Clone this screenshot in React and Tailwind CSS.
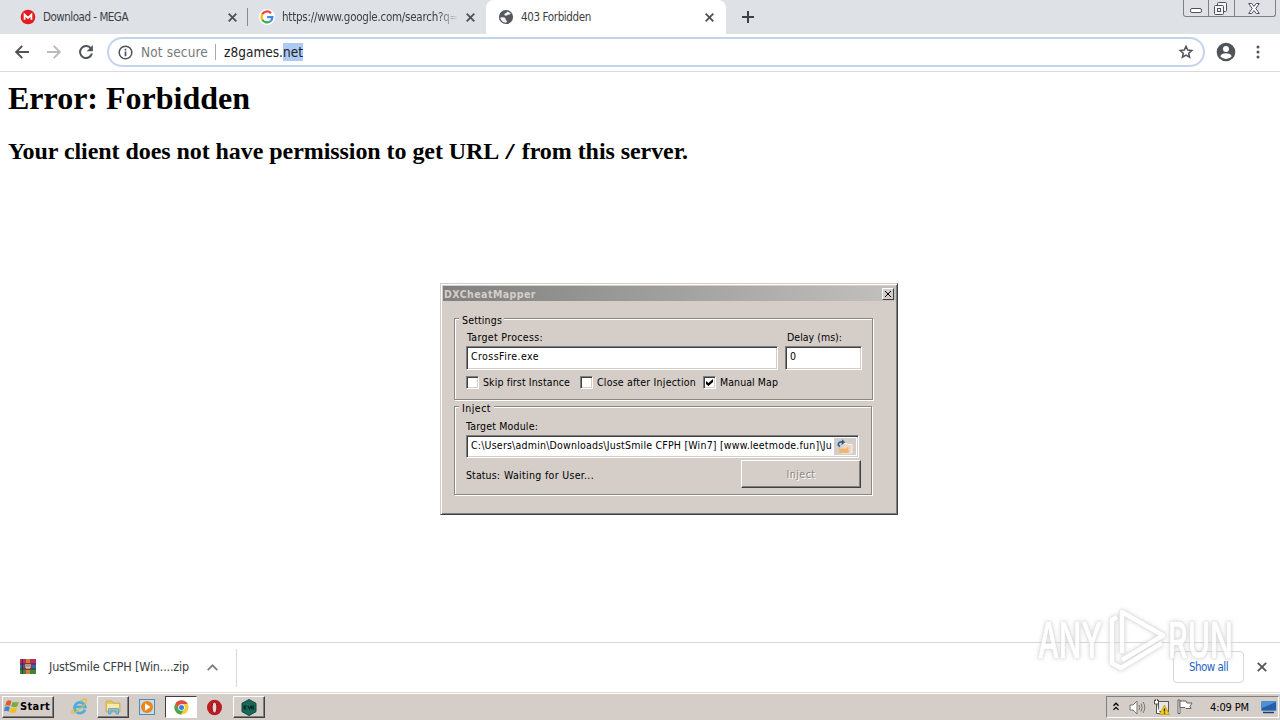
import { useLayoutEffect, useRef } from "react";

const UI = "font-['DejaVu_Sans_Condensed','DejaVu_Sans',sans-serif] [font-stretch:condensed]";

// Single line of text spread over a known width in pixels.
function Fit({ w, className = "", children }) {
  const ref = useRef(null);
  useLayoutEffect(() => {
    const el = ref.current;
    el.style.letterSpacing = "0px";
    const natural = el.getBoundingClientRect().width;
    el.style.letterSpacing = (w - natural) / el.textContent.length + "px";
  }, [w]);
  return (
    <span ref={ref} className={`inline-block shrink-0 whitespace-pre ${className}`}>
      {children}
    </span>
  );
}

function Cross({ className = "", size = 9, width = 1.9 }) {
  return (
    <svg className={`shrink-0 ${className}`} width={size} height={size} viewBox="0 0 9 9" stroke="#505459" strokeWidth={width}>
      <path d="M.7.7l7.6 7.6M8.3.7L.7 8.3" />
    </svg>
  );
}

function Mega() {
  return (
    <svg className="shrink-0" width="16" height="16" viewBox="0 0 16 16">
      <circle cx="8" cy="8" r="7.3" fill="#e31b23" />
      <path d="M4.6 10.7V5.6L8 8.9l3.4-3.3v5.1" fill="none" stroke="#fff" strokeWidth="1.8" />
    </svg>
  );
}

function Google() {
  return (
    <svg className="shrink-0" width="16" height="16" viewBox="0 0 16 16">
      <circle cx="8" cy="8" r="8" fill="#fff" />
      <g fill="none" strokeWidth="2.2">
        <path d="M12 4.2A5.4 5.4 0 0 0 3.3 5.3" stroke="#ea4335" />
        <path d="M3.3 5.3a5.4 5.4 0 0 0 0 5.4" stroke="#fbbc05" />
        <path d="M3.3 10.7a5.4 5.4 0 0 0 8.4 1.3" stroke="#34a853" />
        <path d="M11.7 12a5.4 5.4 0 0 0 1.7-3.9H8.2" stroke="#4285f4" />
      </g>
    </svg>
  );
}

function Globe() {
  return (
    <svg className="shrink-0" width="16" height="16" viewBox="0 0 16 16">
      <circle cx="8" cy="8" r="7.1" fill="#55595e" />
      <path d="M2.300 8.600c2-.5 4.300-.3 5.200.8.400.8-.2 1.600.8 2.100 1 .4.700 1.300.2 2.100-3.600.3-6-2-6.200-5zM8.800 2.600c1.900.1 3.300 1.200 4.100 2.500-1.200-.2-1.500.9-2.700.7-1 0-1.300 1-2.500.9-1.400-.1-1.700-1.400-.8-2.100.800-.5 2-.6 1.900-2z" fill="#f1f3f4" />
    </svg>
  );
}

function TabStrip() {
  return (
    <div className="flex h-[34px] shrink-0 items-start bg-[#dee1e6] text-[12px] leading-[16px] text-[#3c4043]">
      <div className="flex h-[34px] w-[247px] shrink-0 items-center pl-5">
        <Mega />
        <Fit w={85} className="ml-[7px] text-[11.5px]">Download - MEGA</Fit>
        <Cross className="ml-auto mr-[10px]" />
      </div>
      <div className="mt-2 h-[18px] w-px shrink-0 bg-[#868b90]" />
      <div className="flex h-[34px] w-[238px] shrink-0 items-center pl-[11px]">
        <Google />
        <div className="ml-[7px] w-[176px] overflow-hidden [mask-image:linear-gradient(90deg,#000_88%,transparent)]">
          <Fit w={176} className="text-[11.5px]">https://www.google.com/search?q=</Fit>
        </div>
        <Cross className="ml-2" />
      </div>
      <div className="flex h-[34px] w-[240px] shrink-0 items-center rounded-t-lg bg-white pl-3">
        <Globe />
        <Fit w={70} className="ml-[7px] text-[11.5px]">403 Forbidden</Fit>
        <Cross className="ml-auto mr-[12px]" />
      </div>
      <svg className="ml-4 mt-[11px]" width="12" height="12" viewBox="0 0 12 12" stroke="#3c4043" strokeWidth="2">
        <path d="M6 0v12M0 6h12" />
      </svg>
      <div className="ml-auto mr-[4px] flex h-[17px] w-[93px] rounded-b-[3px] border border-t-0 border-[#7d8087] bg-[#dfe1e6]">
        <div className="w-[25px] border-r border-[#7d8087] pl-[6px] pt-[8px]">
          <div className="h-[5px] w-3 rounded-[2px] border border-[#4b5060] bg-white" />
        </div>
        <div className="w-[26px] border-r border-[#7d8087] pl-[5px] pt-[2px]">
          <svg width="13" height="13" viewBox="0 0 13 13" fill="#f5f6f8" stroke="#4b5060">
            <rect x="3.500" y=".5" width="9" height="9" rx="1" />
            <rect x=".5" y="3.500" width="9" height="9" rx="1" />
            <rect x="3.500" y="6.500" width="3" height="3" />
          </svg>
        </div>
        <svg className="ml-[13px] mt-[3px]" width="12" height="11" viewBox="0 0 12 11" fill="#fff" stroke="#4b5060">
          <path d="M.7.5h3L6 3.400 8.300.5h3L7.800 5.500l3.500 5h-3L6 7.600l-2.300 2.900h-3l3.500-5z" />
        </svg>
      </div>
    </div>
  );
}

function Toolbar() {
  return (
    <div className="flex h-[38px] shrink-0 items-center border-b border-[#d9dbde] bg-white pb-px">
      <svg className="ml-[15px]" width="14" height="14" viewBox="0 0 14 14" fill="none" stroke="#505357" strokeWidth="1.900">
        <path d="M14 7H1.500M7.300.9L1.200 7l6.100 6.100" />
      </svg>
      <svg className="ml-[18px]" width="14" height="14" viewBox="0 0 14 14" fill="none" stroke="#b9bbbe" strokeWidth="1.900">
        <path d="M0 7h12.500M6.700.9L12.800 7l-6.100 6.100" />
      </svg>
      <svg className="ml-[18px]" width="14" height="14" viewBox="0 0 14 14">
        <path d="M12 3.600A6 6 0 1 0 12.900 8.500" fill="none" stroke="#505357" strokeWidth="2" />
        <path d="M13.900 0v6.200H7.700z" fill="#505357" />
      </svg>
      <div className="ml-[14px] flex h-[30px] w-[1098px] items-center rounded-full border-2 border-[#c3d3ec] bg-white pl-[9px] text-[13.500px] leading-[18px] text-[#202124]">
        <svg width="15" height="15" viewBox="0 0 15 15" fill="none" stroke="#505357">
          <circle cx="7.500" cy="7.500" r="6.300" strokeWidth="1.500" />
          <path d="M7.500 6.500v4.800M7.500 3.700v1.700" strokeWidth="1.700" />
        </svg>
        <Fit w={67} className="ml-2 text-[#76797d]">Not secure</Fit>
        <div className="ml-[7px] mr-[8px] h-4 w-px bg-[#a6a9ad]" />
        <div className="flex">
          <Fit w={59}>z8games.</Fit>
          <Fit w={20} className="bg-[#accaf4]">net</Fit>
        </div>
        <svg className="ml-auto mr-[9px]" width="16" height="16" viewBox="0 0 16 16" fill="none" stroke="#505357" strokeWidth="1.500">
          <path d="M8 2.300l1.700 3.800 4.100.4-3.100 2.700.9 4L8 11.100l-3.600 2.100.9-4-3.100-2.700 4.100-.4z" />
        </svg>
      </div>
      <svg className="ml-[11px]" width="20" height="20" viewBox="0 0 20 20">
        <circle cx="10" cy="10" r="9.300" fill="#505357" />
        <circle cx="10" cy="7" r="3" fill="#fff" />
        <path d="M4.200 14.200c1-2.300 4-2.900 5.800-2.900s4.800.6 5.800 2.900A7.200 7.200 0 0 1 10 17a7.200 7.200 0 0 1-5.800-2.800z" fill="#fff" />
      </svg>
      <svg className="ml-[20px]" width="4" height="14" viewBox="0 0 4 14" fill="#505357">
        <circle cx="2" cy="2" r="1.500" />
        <circle cx="2" cy="7" r="1.500" />
        <circle cx="2" cy="12" r="1.500" />
      </svg>
    </div>
  );
}

const SUNKEN = "border border-t-[#808080] border-l-[#808080] border-b-white border-r-white bg-white shadow-[inset_1px_1px_0_#404040,inset_-1px_-1px_0_#d5cec8]";
const GROUP = "border border-[#8a8681] shadow-[1px_1px_0_#fff,inset_1px_1px_0_#fff]";

function Check({ on, w, children, className = "" }) {
  return (
    <div className={`flex items-center ${className}`}>
      <div className={`flex h-[13px] w-[13px] shrink-0 items-center justify-center ${SUNKEN}`}>
        {on && (
          <svg width="7" height="7" viewBox="0 0 7 7">
            <path d="M0 2v3l2.500 2L7 3V0L2.500 4z" fill="#000" />
          </svg>
        )}
      </div>
      <Fit w={w} className="ml-1">{children}</Fit>
    </div>
  );
}

function Dialog() {
  return (
    <div className="absolute left-[440px] top-[283px] h-[232px] w-[458px] border border-b-[#404040] border-l-[#d5cec8] border-r-[#404040] border-t-[#d5cec8] bg-[#d5cec8] p-px text-[10.500px] leading-[13px] text-black shadow-[inset_1px_1px_0_#fff,inset_-1px_-1px_0_#808080]">
      <div className="ml-px mt-px flex h-[15px] w-[453px] items-center bg-linear-to-r from-[#808080] to-[#c2c1be]">
        <Fit w={92} className="ml-px mt-px font-bold text-[#d5cec8]">DXCheatMapper</Fit>
        <div className="ml-auto mr-[2px] flex h-3 w-3 items-center justify-center border border-b-[#404040] border-l-white border-r-[#404040] border-t-white bg-[#d5cec8]">
          <svg width="6" height="6" viewBox="0 0 6 6" stroke="#000" strokeWidth="1">
            <path d="M0 0l6 6M6 0L0 6" />
          </svg>
        </div>
      </div>
      <div className={`ml-[12px] mt-[17px] h-[82px] w-[419px] ${GROUP}`}>
        <div className="-mt-[5px] ml-[4px] flex w-[45px] bg-[#d5cec8] px-[3px]">
          <Fit w={40}>Settings</Fit>
        </div>
        <div className="ml-[12px] mt-[4px] flex">
          <Fit w={76}>Target Process:</Fit>
          <Fit w={55} className="ml-[244px]">Delay (ms):</Fit>
        </div>
        <div className="ml-[11px] mt-[2px] flex gap-[7px]">
          <div className={`h-6 w-[312px] pl-1 pt-[3px] ${SUNKEN}`}><Fit w={68}>CrossFire.exe</Fit></div>
          <div className={`h-6 w-[77px] pl-1 pt-[3px] ${SUNKEN}`}>0</div>
        </div>
        <div className="ml-[11px] mt-[6px] flex">
          <Check w={87}>Skip first Instance</Check>
          <Check w={99} className="ml-[10px]">Close after Injection</Check>
          <Check w={58} className="-mt-px ml-[7px]" on>Manual Map</Check>
        </div>
      </div>
      <div className={`ml-[12px] mt-[6px] h-[89px] w-[418px] ${GROUP}`}>
        <div className="-mt-[5px] ml-[4px] flex w-[35px] bg-[#d5cec8] px-[3px]">
          <Fit w={29}>Inject</Fit>
        </div>
        <div className="ml-[11px] mt-[5px] flex"><Fit w={72}>Target Module:</Fit></div>
        <div className={`ml-[11px] mt-[2px] flex h-[23px] w-[393px] items-start pl-1 ${SUNKEN}`}>
          <Fit w={361} className="mt-[3px]">{"C:\\Users\\admin\\Downloads\\JustSmile CFPH [Win7] [www.leetmode.fun]\\Ju"}</Fit>
          <div className="ml-[2px] mt-[2px] flex h-[17px] w-[22px] items-center justify-center bg-[#d5cec8]">
            <svg width="18" height="16" viewBox="0 0 18 16">
              <path d="M8 4.500h3l1 1h4V14H5V9" fill="#ead8c2" stroke="#f7f3ee" />
              <path d="M2.500 9.500H10L12 8l1 6H4z" fill="#efb66e" />
              <path d="M4 7.500C.3 5.500 3 2 7 3" fill="none" stroke="#246597" strokeWidth="1.700" />
              <path d="M6 .3L9.300 3.300 5.500 6z" fill="#246597" />
            </svg>
          </div>
        </div>
        <div className="ml-[11px] mt-[2px] flex">
          <Fit w={34} className="mt-[9px]">Status:</Fit>
          <Fit w={90} className="ml-[4px] mt-[9px]">Waiting for User...</Fit>
          <div className="ml-[147px] flex h-[28px] w-[120px] items-center justify-center border border-b-[#404040] border-l-white border-r-[#404040] border-t-white text-[#8a8681] shadow-[inset_-1px_-1px_0_#808080] [text-shadow:1px_1px_0_#fff]">
            <Fit w={29}>Inject</Fit>
          </div>
        </div>
      </div>
    </div>
  );
}

function Shelf() {
  return (
    <div className="flex h-[50px] shrink-0 items-start border-t border-[#d5d7da] bg-white">
      <svg className="ml-5 mt-4" width="16" height="15" viewBox="0 0 16 15">
        <path fill="#b5305c" d="M0 0h16v5H0z" />
        <path fill="#3b62b5" d="M0 5h16v5H0z" />
        <path fill="#37883e" d="M0 10h16v5H0z" />
        <path fill="#d67b3c" d="M6 0h4v15H6z" />
        <path fill="#4b2b29" d="M0 4.500h16v1H0zM0 9.500h16v1H0zM2 0h1v15H2z" />
        <path fill="#7d3a35" d="M4.500 4h7v7h-7z" />
        <path d="M6 5v4h4V5M8 5v4" fill="none" stroke="#f3ebe0" />
      </svg>
      <Fit w={140} className="ml-[13px] mt-[15px] text-[12.500px] leading-[17px] text-[#3c4043]">JustSmile CFPH [Win....zip</Fit>
      <svg className="ml-[18px] mt-[21px]" width="11" height="7" viewBox="0 0 11 7" fill="none" stroke="#7b7e82" strokeWidth="1.700">
        <path d="M.7 6.200L5.500 1.300l4.800 4.900" />
      </svg>
      <div className="ml-[18px] mt-[6px] h-[38px] w-px bg-[#d5d7da]" />
      <div className="ml-auto mt-[8px] flex h-8 w-[71px] items-center justify-center rounded border border-[#d5d7da] text-[11.500px] leading-4 text-[#2464c4]">
        <Fit w={39}>Show all</Fit>
      </div>
      <Cross className="ml-[13px] mr-[13px] mt-[19px]" size={10} width={1.600} />
    </div>
  );
}

const RAISED = "border border-t-white border-l-white border-b-[#404040] border-r-[#404040] shadow-[inset_-1px_-1px_0_#808080]";

function Taskbar() {
  return (
    <div className="flex h-7 shrink-0 items-start border-t border-[#dedad5] bg-[#d5cec8] pt-[2px] text-[11px] leading-[13px] text-black shadow-[inset_0_1px_0_#fff]">
      <div className={`ml-[2px] mt-px flex h-[22px] w-[52px] items-center pl-px ${RAISED}`}>
        <svg width="16" height="16" viewBox="0 0 15 15">
          <path d="M2.500 2Q5 .5 7 2L5.800 6.500Q3.500 5 1 6.500z" fill="#e25a25" />
          <path d="M8 2.500q2.500 1.300 6 0L12.500 7Q9.500 8.400 6.800 7z" fill="#77ae3f" />
          <path d="M.8 7.500q2.500-1.500 4.700 0L4.300 12Q2 10.500 0 11.500z" fill="#3f83cc" />
          <path d="M6.500 8q2.500 1.300 5.700 0L11 12.500q-3 1.300-5.700-.2z" fill="#f4bd26" />
        </svg>
        <Fit w={30} className="-mt-px font-bold">Start</Fit>
      </div>
      <svg className="ml-[17px] mt-[3px]" width="17" height="17" viewBox="0 0 17 17" fill="none">
        <path d="M14 11.500A5.400 5.400 0 1 1 14.200 8.800H4.500" stroke="#4eaddd" strokeWidth="2.800" />
        <path d="M15 1.200c1.500 1-1 6-5.500 9.600S1.500 15.800 1 15c-.6-1 1-3 2-4M9.500 3C12 1.300 14 .7 15 1.200" stroke="#dfbd42" strokeWidth="1.300" />
      </svg>
      <div className={`ml-[9px] mt-px flex h-[22px] w-8 items-center justify-center ${RAISED}`}>
        <svg width="17" height="16" viewBox="0 0 17 16">
          <path d="M1 2h6l1 2h7v9H1z" fill="#e7c95e" stroke="#b89a43" strokeWidth=".6" />
          <path d="M2 5h12v6H2z" fill="#f8e9a7" />
          <path d="M3.500 15V9.500h10V15h-2.500v-3H6v3z" fill="#7fc3e6" stroke="#468db6" strokeWidth=".6" />
        </svg>
      </div>
      <svg className="ml-[10px] mt-[4px]" width="16" height="16" viewBox="0 0 16 16">
        <rect x=".5" y=".5" width="15" height="15" fill="#c4dff2" stroke="#508bb8" />
        <circle cx="8" cy="8" r="6" fill="#ec8616" />
        <path d="M6 4.200L11.500 8 6 11.800z" fill="#fff" />
      </svg>
      <div className="ml-[10px] mt-px flex h-[22px] w-8 items-center justify-center border border-b-white border-l-[#404040] border-r-white border-t-[#404040] bg-white">
        <svg width="15" height="15" viewBox="0 0 15 15">
          <circle cx="7.500" cy="7.500" r="7" fill="#f4cb38" />
          <path d="M1.300 4A7 7 0 0 1 13.700 4H7.500L5 9z" fill="#df4b3c" />
          <path d="M1.300 4A7 7 0 0 0 7 14.500L9.600 9.500 5 9z" fill="#4ba450" />
          <circle cx="7.500" cy="7.500" r="3.300" fill="#fff" />
          <circle cx="7.500" cy="7.500" r="2.500" fill="#3d7de0" />
        </svg>
      </div>
      <svg className="ml-[9px] mt-[4px]" width="17" height="17" viewBox="0 0 17 17">
        <ellipse cx="8.500" cy="8.500" rx="7.500" ry="7.800" fill="#bd1c22" />
        <ellipse cx="8.500" cy="8.500" rx="2.400" ry="5.500" fill="#edd4d3" stroke="#7d1014" />
      </svg>
      <div className={`ml-[10px] mt-px flex h-[22px] w-8 items-center justify-center ${RAISED}`}>
        <svg width="16" height="17" viewBox="0 0 16 17">
          <path d="M8 .5l7 3.800v8.400l-7 3.800-7-3.800V4.300z" fill="#176856" stroke="#12493f" />
          <path d="M5.800 7H3v3h2.800M7 7l1.600 3L10 7M13.200 7h-2.500v3h2.500M10.700 8.500H13M3 8.500h2" stroke="#072a28" strokeWidth="1.200" fill="none" />
        </svg>
      </div>
      <div className="ml-auto mr-[1px] mt-px flex h-[22px] w-[173px] items-center border border-b-white border-l-[#808080] border-r-white border-t-[#808080]">
        <svg className="ml-[6px] -mt-[2px]" width="6" height="9" viewBox="0 0 6 9" fill="none" stroke="#000" strokeWidth="1.300">
          <path d="M.5 3.700L3 1.200l2.500 2.500M.5 7.900L3 5.400l2.500 2.500" />
        </svg>
        <svg className="ml-[10px]" width="17" height="15" viewBox="0 0 17 15" stroke="#77736f" fill="none">
          <path d="M1 5h3l4-4v13l-4-4H1z" fill="#fff" />
          <path d="M10 5q1.500 2.500 0 5M12 3.500q2.500 4 0 8M14 2q3.500 5.500 0 11" />
        </svg>
        <svg className="ml-[7px]" width="17" height="16" viewBox="0 0 17 16">
          <rect x="5.500" y="2.500" width="10" height="10" fill="#e5e5e3" stroke="#5b5a58" />
          <path d="M3.500 5v9.500H7M1.500 1v4h4V1M2.500 0v2M4.500 0v2" fill="#fff" stroke="#55524f" />
          <path d="M11.500 6l5 9.500h-10z" fill="#f2cc20" stroke="#a98d18" strokeWidth=".6" />
          <path d="M11.500 9.500v3M11.500 13.500v1.300" stroke="#292615" strokeWidth="1.300" />
        </svg>
        <svg className="ml-[7px] -mt-px" width="16" height="15" viewBox="0 0 16 15" stroke="#64615e">
          <path d="M1 1h2v13.500H1z" fill="#fff" />
          <path d="M3 2h6l1 2h5l-2 3.500 1 2H9l-1-1H3z" fill="#fff" />
        </svg>
        <Fit w={39} className="ml-auto">4:09 PM</Fit>
        <svg className="ml-[12px] mr-px" width="16" height="14" viewBox="0 0 16 14">
          <path d="M0 1h15.500v10H0z" fill="#255fac" stroke="#b9d2e9" strokeWidth=".7" />
          <path d="M1 2h14L1 8z" fill="#4f91d5" />
          <path d="M2 12.500h11" stroke="#1f406d" strokeWidth="1.500" />
        </svg>
      </div>
    </div>
  );
}

function Watermark() {
  return (
    <svg className="pointer-events-none absolute left-[1030px] top-[600px] overflow-visible" width="216" height="80" viewBox="0 0 216 80">
      <g className="[filter:drop-shadow(0_0_1px_#d0d0d0)_drop-shadow(0_0_2px_#ccc)]" fill="#fff" opacity="0.8">
        <text x="8" y="58" textLength="64" lengthAdjust="spacingAndGlyphs" fontSize="50" stroke="#fff" strokeWidth=".7" className="font-['Inter',sans-serif] font-medium">ANY</text>
        <text x="138" y="58" textLength="65" lengthAdjust="spacingAndGlyphs" fontSize="50" stroke="#fff" strokeWidth=".7" className="font-['Inter',sans-serif] font-medium">RUN</text>
        <path d="M92 53V12l41 23.500L92 60M87 17l-5 3v43l9 5 41-25" fill="none" stroke="#fff" strokeWidth="4.500" strokeLinejoin="round" />
      </g>
    </svg>
  );
}

export default function App() {
  return (
    <div className={`relative flex h-[720px] w-[1280px] flex-col overflow-hidden bg-white ${UI}`}>
      <TabStrip />
      <Toolbar />
      <main className="flex-1 pl-2 pt-[8px] font-['Liberation_Serif',serif] font-bold text-black">
        <h1 className="text-[32px] leading-[37px]"><Fit w={242}>Error: Forbidden</Fit></h1>
        <h2 className="mt-[20px] text-[24px] leading-[28px]">
          <Fit w={680}>
            Your client does not have permission to get URL <code className="font-['Liberation_Mono',monospace] text-[20px]">/</code> from this server.
          </Fit>
        </h2>
      </main>
      <Shelf />
      <Taskbar />
      <Dialog />
      <Watermark />
    </div>
  );
}
